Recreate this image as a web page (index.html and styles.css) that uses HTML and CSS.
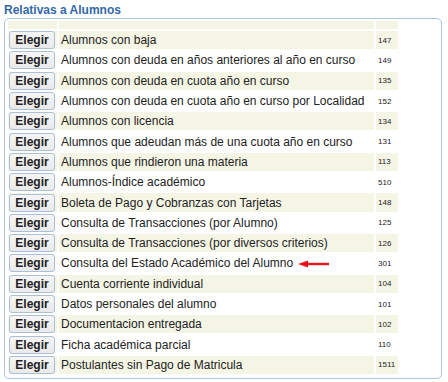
FILE: index.html
```html
<!DOCTYPE html>
<html lang="es">

<head>
    <meta charset="UTF-8" />
    <title>Consultas</title>
    <link rel="stylesheet" href="styles.css">
</head>

<body>
    <h2 class="group-title">Relativas a Alumnos</h2>
    <div class="panel">
        <table class="list">
            <tr class="head"><td class="c-btn"></td><td class="c-name"></td><td class="c-num"></td></tr>
            <tr class="odd"><td class="c-btn"><button type="button">Elegir</button></td><td class="c-name">Alumnos con baja</td><td class="c-num">147</td></tr>
            <tr><td class="c-btn"><button type="button">Elegir</button></td><td class="c-name">Alumnos con deuda en años anteriores al año en curso</td><td class="c-num">149</td></tr>
            <tr class="odd"><td class="c-btn"><button type="button">Elegir</button></td><td class="c-name">Alumnos con deuda en cuota año en curso</td><td class="c-num">135</td></tr>
            <tr><td class="c-btn"><button type="button">Elegir</button></td><td class="c-name">Alumnos con deuda en cuota año en curso por Localidad</td><td class="c-num">152</td></tr>
            <tr class="odd"><td class="c-btn"><button type="button">Elegir</button></td><td class="c-name">Alumnos con licencia</td><td class="c-num">134</td></tr>
            <tr><td class="c-btn"><button type="button">Elegir</button></td><td class="c-name">Alumnos que adeudan más de una cuota año en curso</td><td class="c-num">131</td></tr>
            <tr class="odd"><td class="c-btn"><button type="button">Elegir</button></td><td class="c-name">Alumnos que rindieron una materia</td><td class="c-num">113</td></tr>
            <tr><td class="c-btn"><button type="button">Elegir</button></td><td class="c-name">Alumnos-Índice académico</td><td class="c-num">510</td></tr>
            <tr class="odd"><td class="c-btn"><button type="button">Elegir</button></td><td class="c-name">Boleta de Pago y Cobranzas con Tarjetas</td><td class="c-num">148</td></tr>
            <tr><td class="c-btn"><button type="button">Elegir</button></td><td class="c-name">Consulta de Transacciones (por Alumno)</td><td class="c-num">125</td></tr>
            <tr class="odd"><td class="c-btn"><button type="button">Elegir</button></td><td class="c-name">Consulta de Transacciones (por diversos criterios)</td><td class="c-num">126</td></tr>
            <tr><td class="c-btn"><button type="button">Elegir</button></td><td class="c-name">Consulta del Estado Académico del Alumno<svg class="arrow" width="32" height="8" viewBox="0 0 32 8"><path d="M31 4H8" stroke="#e8141b" stroke-width="2.4"/><path d="M0 4L10 0.5V7.5Z" fill="#e8141b"/></svg></td><td class="c-num">301</td></tr>
            <tr class="odd"><td class="c-btn"><button type="button">Elegir</button></td><td class="c-name">Cuenta corriente individual</td><td class="c-num">104</td></tr>
            <tr><td class="c-btn"><button type="button">Elegir</button></td><td class="c-name">Datos personales del alumno</td><td class="c-num">101</td></tr>
            <tr class="odd"><td class="c-btn"><button type="button">Elegir</button></td><td class="c-name">Documentacion entregada</td><td class="c-num">102</td></tr>
            <tr><td class="c-btn"><button type="button">Elegir</button></td><td class="c-name">Ficha académica parcial</td><td class="c-num">110</td></tr>
            <tr class="odd"><td class="c-btn"><button type="button">Elegir</button></td><td class="c-name">Postulantes sin Pago de Matricula</td><td class="c-num">1511</td></tr>
        </table>
    </div>
    <h2 class="group-title next">Relativas a Cuotas, Cheques y Antes de Cuotas</h2>
</body>

</html>
```

FILE: styles.css
```css
body {
  margin: 0;
  font-family: "Liberation Sans", Arial, sans-serif;
  color: #222;
  background-color: #fff;
}

.group-title {
  margin: 0;
  padding: 3px 4px 0;
  height: 14px;
  font-size: 12px;
  font-weight: bold;
  color: #3268a8;
}

.group-title.next {
  padding-top: 2px;
}

.panel {
  margin: 1px 6px 0 4px;
  border: 1px solid #aac6e2;
  border-radius: 5px;
  padding: 0 1px 2px;
}

.list {
  border-spacing: 2px;
  font-size: 12px;
}

.list td {
  padding: 0;
  height: 18.3px;
  background-color: #fff;
}

.list tr.odd td,
.list tr.head td {
  background-color: #f5f5e6;
}

.list tr.head td {
  height: 8px;
}

.c-btn {
  width: 49px;
  padding: 0 0 0 1px;
}

.c-name {
  width: 313px;
  padding-left: 2px !important;
}

.c-num {
  width: 20px;
  font-size: 8px;
  padding-left: 2px !important;
}

.list button {
  display: block;
  width: 46px;
  height: 18px;
  padding: 0;
  margin-left: 1px;
  border: 1px solid #a9c0d6;
  border-radius: 3px;
  background: linear-gradient(#f6f6f6, #e9e9e9);
  font-family: "Liberation Sans", Arial, sans-serif;
  font-size: 12px;
  font-weight: bold;
  color: #222;
}

.arrow {
  margin-left: 5px;
  vertical-align: middle;
}
```
